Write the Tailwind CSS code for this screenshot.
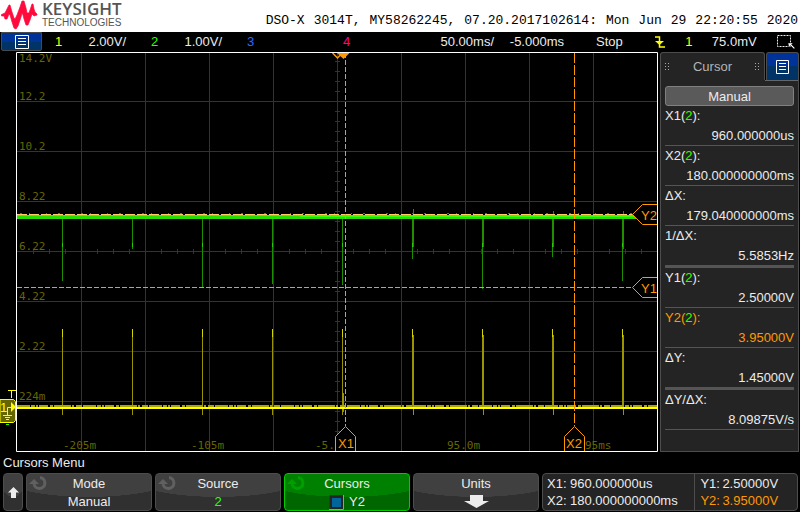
<!DOCTYPE html>
<html lang="en">
<head>
<meta charset="utf-8">
<meta name="viewport" content="width=device-width, initial-scale=1">
<title>DSO-X 3014T</title>
<script src="https://cdn.jsdelivr.net/npm/@tailwindcss/browser@4"></script>
</head>
<body class="min-h-screen bg-black font-['Liberation_Sans',Arial,sans-serif] text-[13px] text-[#ececec]">

<header class="flex h-8 items-center justify-between bg-white text-black">
  <div class="flex h-8 items-start gap-1 pl-px">
    <svg class="h-[30px] w-[37px]" viewBox="0 0 37 30" aria-hidden="true">
      <path fill="#ff0a3c" stroke="#ff0a3c" stroke-width=".7" stroke-linejoin="round" d="M0.500 14.500 L4 13 L6 9 L8 5 L9 5 L11 12 L13 18 L14 19 L16 15 L19 7 L21 1 L23 1 L25 8 L26 13 L28 13 L30 7 L31 4 L32 4 L33 9 L34 12 L36 14 L36 15 L33 16 L31 14 L29 20 L27 25 L25 25 L23 19 L22 15 L21 13 L20 17 L17 26 L15 29 L13 28 L11 22 L9 15 L8 14 L6 19 L4 19 L3 16 L0.500 16 Z"/>
    </svg>
    <div class="flex flex-col text-[#555555]">
      <span class="h-[18px] font-['Open_Sans',sans-serif] text-[17px] font-semibold leading-[18px]">KEYSIGHT</span>
      <span class="text-[10px] leading-[10px]">TECHNOLOGIES</span>
    </div>
  </div>
  <p class="flex gap-[9px] pr-[2px] pt-[9px] font-['Liberation_Mono',monospace] leading-5">
    <span>DSO-X</span><span>3014T,</span><span>MY58262245,</span><span>07.20.2017102614:</span><span>Mon</span><span>Jun</span><span>29</span><span>22:20:55</span><span>2020</span>
  </p>
</header>

<section aria-label="Status" class="grid h-5 grid-cols-[48fr_96fr_96fr_96fr_96fr_62fr_70fr_76fr_160fr] items-center leading-5">
  <button type="button" aria-label="Main menu" class="ml-px flex h-[19px] w-[41px] items-center justify-center self-start rounded-b-xs border border-[#4a4a4a] bg-linear-to-b from-[#003399] from-50% to-[#003366] to-50%">
    <svg class="size-[14px]" viewBox="0 0 14 14" fill="none" stroke="#fff" aria-hidden="true"><path d="M.5 .5H13.500V13.500H.5ZM3 3.500H11M3 6.500H11M3 9.500H11"/></svg>
  </button>
  <div class="flex justify-between pl-[7px] pr-[18px]"><span class="text-[#ffff00]">1</span><span>2.00V/</span></div>
  <div class="flex justify-between pl-[7px] pr-[18px]"><span class="text-[#33ff00]">2</span><span>1.00V/</span></div>
  <div class="pl-[7px] text-[#3366ff]">3</div>
  <div class="pl-[7px] text-[#ff0099]">4</div>
  <div class="text-right">50.00ms/</div>
  <div class="text-right">-5.000ms</div>
  <div class="pl-8">Stop</div>
  <div class="flex items-center justify-between pl-[14px] pr-1">
    <svg class="h-3 w-3" viewBox="0 0 12 12" aria-hidden="true"><path d="M1 1H5.500V11H11" fill="none" stroke="#ffff00" stroke-width="1.500"/><path d="M1 5H10L5.500 9Z" fill="#ffff00"/></svg>
    <span class="text-[#ffff00]">1</span>
    <span>75.0mV</span>
    <svg class="h-4 w-5" viewBox="0 0 20 16" aria-hidden="true"><path d="M1.500 1.500H14.500V12.500H1.500Z" fill="none" stroke="#ececec" stroke-dasharray="2 1"/><path d="M12 9H17L15.500 10.500L19 14L18 15L14.500 11.500L13 13Z" fill="#fff" stroke="#000" stroke-width=".4"/></svg>
  </div>
</section>

<main class="flex items-start gap-[2px] pr-[1px]">
  <svg class="block min-w-0 flex-[658]" viewBox="0 52 658 400" role="img" aria-label="Waveform display">
    <defs>
      <clipPath id="plot"><rect x="17" y="53" width="640" height="398"/></clipPath>
    </defs>
    <g stroke="#333333" fill="none">
      <path d="M81.500 53V451M145.500 53V451M209.500 53V451M273.500 53V451M337.500 53V451M401.500 53V451M465.500 53V451M529.500 53V451M593.500 53V451"/>
      <path d="M17 101.500H657M17 151.500H657M17 201.500H657M17 251.500H657M17 301.500H657M17 351.500H657M17 401.500H657"/>
      <path d="M33 251.500H657" stroke-width="5" stroke-dasharray="1 15"/>
      <path d="M337.500 61V451" stroke-width="5" stroke-dasharray="1 9"/>
    </g>
    <g fill="#666600" font-family="DejaVu Sans Mono, monospace" font-size="11">
      <text x="19" y="62">14.2V</text><text x="19" y="100">12.2</text><text x="19" y="150">10.2</text>
      <text x="19" y="200">8.22</text><text x="19" y="250">6.22</text><text x="19" y="300">4.22</text>
      <text x="19" y="350">2.22</text><text x="19" y="400">224m</text>
      <text x="63" y="449">-205m</text><text x="191" y="449">-105m</text><text x="315" y="449">-5.</text>
      <text x="447" y="449">95.0m</text><text x="585" y="449">95ms</text>
    </g>
    <g clip-path="url(#plot)" fill="none">
      <path stroke="#1f8f00" d="M62.500 219V281M132.500 219V249M202.500 219V287M272.500 219V284M342.500 219V285M412.500 219V259M413.500 209V247M482.500 219V289M483.500 219V247M552.500 219V257M553.500 211V247M622.500 219V281M623.500 211V249"/>
      <path stroke="#22cc00" d="M62.500 243V247M132.500 243V247M202.500 243V247M272.500 243V247M342.500 243V247M412.500 243V247M482.500 243V247M552.500 243V247M622.500 243V247"/>
      <path stroke="#1f9900" stroke-dasharray="2 7 1 16 1 11 2 21" d="M20 213.500H634"/>
      <path stroke="#26dd00" stroke-width="4" d="M17 217H636"/>
      <path stroke="#33ff00" stroke-width="1" d="M17 215.500H636M300 216.500H636"/>
      <path stroke="#999400" d="M62.500 329V415M132.500 329V415M202.500 329V415M272.500 329V415M342.500 329V415M343.500 393V412M412.500 329V408M413.500 335V415M482.500 329V408M483.500 335V415M552.500 329V408M553.500 335V415M622.500 329V408M623.500 335V415"/>
      <path stroke="#d4d400" d="M62.500 329V337M132.500 329V337M202.500 329V337M272.500 329V337M342.500 329V337M412.500 329V337M482.500 329V337M552.500 329V337M622.500 329V337"/>
      <path stroke="#aaa400" stroke-width="2" stroke-dasharray="13 1 4 1 2 1 9 2 3 1 17 1 2 2 6 1" d="M17 406H657"/>
      <path stroke="#ffff00" stroke-width="2" d="M17 408H657"/>
      <path stroke="#ffcc66" stroke-dasharray="10 2" d="M17 214.500H633"/>
      <g stroke="#ff9900">
        <path stroke-dasharray="5 2" d="M17 287.500H632M345.500 53V426"/>
        <path stroke-dasharray="10 2" d="M574.500 53V426"/>
        <path fill="#000" d="M658 204.500H642.500L632.500 214.500L642.500 224.500H658M658 277.500H642.500L632.500 287.500L642.500 297.500H658"/>
        <path fill="#000" d="M335.500 452V436.500L345.500 426.500L355.500 436.500V452M564.500 452V436.500L574.500 426.500L584.500 436.500V452"/>
        <path d="M332.500 53L337.500 58L342.500 53" stroke-width="1.500"/>
      </g>
      <path fill="#ff9900" d="M337 53H349.500L343.500 59Z"/>
      <g fill="#ff9900" font-family="Liberation Sans, Arial, sans-serif" font-size="13">
        <text x="641" y="220">Y2</text><text x="641" y="293">Y1</text>
        <text x="338" y="448">X1</text><text x="566" y="448">X2</text>
      </g>
    </g>
    <path d="M16.500 52.500H657.500V451.500H16.500Z" fill="none" stroke="#fff"/>
    <path d="M8 390.500H16M11.500 390V398" fill="none" stroke="#ffff00"/>
    <path d="M0 399.500H13.500L15.500 401.500V420.500L13.500 422.500H0Z" fill="#666600" stroke="#ffff00"/>
    <text x="0" y="412" fill="#ffff00" font-family="Liberation Sans, Arial, sans-serif" font-size="13">1</text>
    <path d="M11 402L16 407L11 412Z" fill="#ffff00"/>
    <path d="M12 407.500H7.500V415M3 415.500H12M5 417.500H10M6 419.500H9" fill="none" stroke="#ffff00"/>
    <path d="M6 424.500H9" stroke="#33ff00"/>
  </svg>

  <aside aria-label="Cursor measurements" class="flex min-w-0 flex-[139] flex-col self-stretch">
    <div class="flex h-7 gap-px">
      <h2 class="flex flex-1 items-center justify-between rounded-t-[3px] border border-b-0 border-[#4d4d4d] bg-[#242424] px-1 text-[#b4b4b4]">
        <svg class="h-[7px] w-[5px]" viewBox="0 0 5 7" fill="#aaa" aria-hidden="true"><path d="M0 0h1v1H0zM3 0h1v1H3zM0 3h1v1H0zM3 3h1v1H3zM0 6h1v1H0zM3 6h1v1H3z"/></svg>
        <span>Cursor</span>
        <svg class="h-[7px] w-[5px]" viewBox="0 0 5 7" fill="#aaa" aria-hidden="true"><path d="M0 0h1v1H0zM3 0h1v1H3zM0 3h1v1H0zM3 3h1v1H3zM0 6h1v1H0zM3 6h1v1H3z"/></svg>
      </h2>
      <button type="button" aria-label="Panel menu" class="flex w-[33px] items-center justify-center rounded-t-[3px] border border-b-0 border-[#4d4d4d] bg-linear-to-b from-[#003399] from-50% to-[#003366] to-50%">
        <svg class="h-[14px] w-[13px]" viewBox="0 0 13 14" fill="none" stroke="#fff" aria-hidden="true"><path d="M.5 .5H12.500V13.500H.5ZM3 3.500H10M3 6.500H10M3 9.500H10"/></svg>
      </button>
    </div>
    <div class="relative flex-1 border border-t-0 border-[#4d4d4d] bg-[#242424] px-1 pt-[6px]">
      <div class="absolute right-0 top-0 h-px w-[33px] bg-[#666666]"></div>
      <button type="button" class="block h-5 w-full rounded-[3px] border border-[#808080] bg-[#5a5a5a] pt-px leading-[18px]">Manual</button>
      <dl class="leading-[18px]">
        <div class="flex flex-col gap-[2px] border-b border-[#555555] pt-px"><dt>X1(<span class="text-[#33ff00]">2</span>):</dt><dd class="text-right">960.000000us</dd></div>
        <div class="flex flex-col gap-[2px] border-b border-[#555555] pt-px"><dt>X2(<span class="text-[#33ff00]">2</span>):</dt><dd class="text-right">180.000000000ms</dd></div>
        <div class="flex flex-col gap-[2px] border-b border-[#555555] pt-px"><dt>ΔX:</dt><dd class="text-right">179.040000000ms</dd></div>
        <div class="flex flex-col gap-[2px] border-b-3 border-[#555555] pt-px"><dt>1/ΔX:</dt><dd class="text-right">5.5853Hz</dd></div>
        <div class="flex flex-col gap-[2px] border-b border-[#555555] pt-px"><dt>Y1(<span class="text-[#33ff00]">2</span>):</dt><dd class="text-right">2.50000V</dd></div>
        <div class="flex flex-col gap-[2px] border-b border-[#555555] pt-px text-[#ff9900]"><dt>Y2(<span class="text-[#33ff00]">2</span>):</dt><dd class="text-right">3.95000V</dd></div>
        <div class="flex flex-col gap-[2px] border-b-3 border-[#555555] pt-px"><dt>ΔY:</dt><dd class="text-right">1.45000V</dd></div>
        <div class="flex flex-col gap-[2px] border-b border-[#555555] pt-px"><dt>ΔY/ΔX:</dt><dd class="text-right">8.09875V/s</dd></div>
      </dl>
    </div>
  </aside>
</main>

<h1 class="h-[21px] pl-[3px] leading-[21px]">Cursors Menu</h1>

<nav aria-label="Softkeys" class="grid grid-cols-[20fr_126fr_126fr_126fr_126fr_256fr] gap-[3px] pl-[3px] pr-[2px] leading-[18px]">
  <button type="button" aria-label="Back" class="flex h-[38px] items-center justify-center rounded-[4px] border border-[#4d4d4d] bg-[radial-gradient(ellipse_75%_23px_at_50%_0,#404040_99%,#303030_100%)]">
    <svg class="h-[11px] w-[11px]" viewBox="0 0 11 11" fill="#ececec" aria-hidden="true"><path d="M5.500 0L11 5.500H8V11H3V5.500H0Z"/></svg>
  </button>
  <button type="button" class="relative flex h-[38px] flex-col items-center rounded-[4px] border border-[#4d4d4d] bg-[radial-gradient(ellipse_75%_23px_at_50%_0,#404040_99%,#303030_100%)] pt-px">
    <svg class="absolute left-[2px] top-px h-[16px] w-[19px]" viewBox="0 0 19 16" aria-hidden="true"><path d="M11 2.500A5.500 5.500 0 1 1 5 9" fill="none" stroke="#606060" stroke-width="3"/><path d="M0 9L5 4L10 9Z" fill="#606060"/></svg>
    <span>Mode</span><span>Manual</span>
  </button>
  <button type="button" class="relative flex h-[38px] flex-col items-center rounded-[4px] border border-[#4d4d4d] bg-[radial-gradient(ellipse_75%_23px_at_50%_0,#404040_99%,#303030_100%)] pt-px">
    <svg class="absolute left-[2px] top-px h-[16px] w-[19px]" viewBox="0 0 19 16" aria-hidden="true"><path d="M11 2.500A5.500 5.500 0 1 1 5 9" fill="none" stroke="#606060" stroke-width="3"/><path d="M0 9L5 4L10 9Z" fill="#606060"/></svg>
    <span>Source</span><span class="text-[#33ff00]">2</span>
  </button>
  <button type="button" class="relative flex h-[38px] flex-col items-center rounded-[4px] border border-[#00cc00] bg-[radial-gradient(ellipse_75%_23px_at_50%_0,#008000_99%,#006600_100%)] pt-px">
    <svg class="absolute left-[2px] top-px h-[16px] w-[19px]" viewBox="0 0 19 16" aria-hidden="true"><path d="M11 2.500A5.500 5.500 0 1 1 5 9" fill="none" stroke="#009f00" stroke-width="3"/><path d="M0 9L5 4L10 9Z" fill="#009f00"/></svg>
    <span>Cursors</span>
    <span class="flex items-center gap-[5px]">
      <svg class="size-[15px]" viewBox="0 0 15 15" aria-hidden="true"><path d="M.5 .5H14.500V14.500H.5Z" fill="#242424" stroke="#333"/><path d="M14.500 0V14.500H0" fill="none" stroke="#999"/><path d="M3 3H12V12H3Z" fill="#006699"/></svg>
      Y2
    </span>
  </button>
  <button type="button" class="flex h-[38px] flex-col items-center rounded-[4px] border border-[#4d4d4d] bg-[radial-gradient(ellipse_75%_23px_at_50%_0,#404040_99%,#303030_100%)] pt-px">
    <span>Units</span>
    <svg class="mt-[2px] h-[13px] w-[25px]" viewBox="0 0 25 13" fill="#ececec" aria-hidden="true"><path d="M6 0H19V6H25L12.500 13L0 6H6Z"/></svg>
  </button>
  <div class="grid h-[38px] grid-cols-[153fr_102fr] rounded-[4px] border border-[#4d4d4d] bg-[#242424] leading-[17px]">
    <dl class="grid grid-cols-[23px_1fr] content-center border-r border-[#4d4d4d] pl-1">
      <dt>X1:</dt><dd>960.000000us</dd><dt>X2:</dt><dd>180.000000000ms</dd>
    </dl>
    <dl class="grid grid-cols-[22px_1fr] content-center pl-[5px]">
      <dt>Y1:</dt><dd>2.50000V</dd><dt class="text-[#ff9900]">Y2:</dt><dd class="text-[#ff9900]">3.95000V</dd>
    </dl>
  </div>
</nav>
</body>
</html>
